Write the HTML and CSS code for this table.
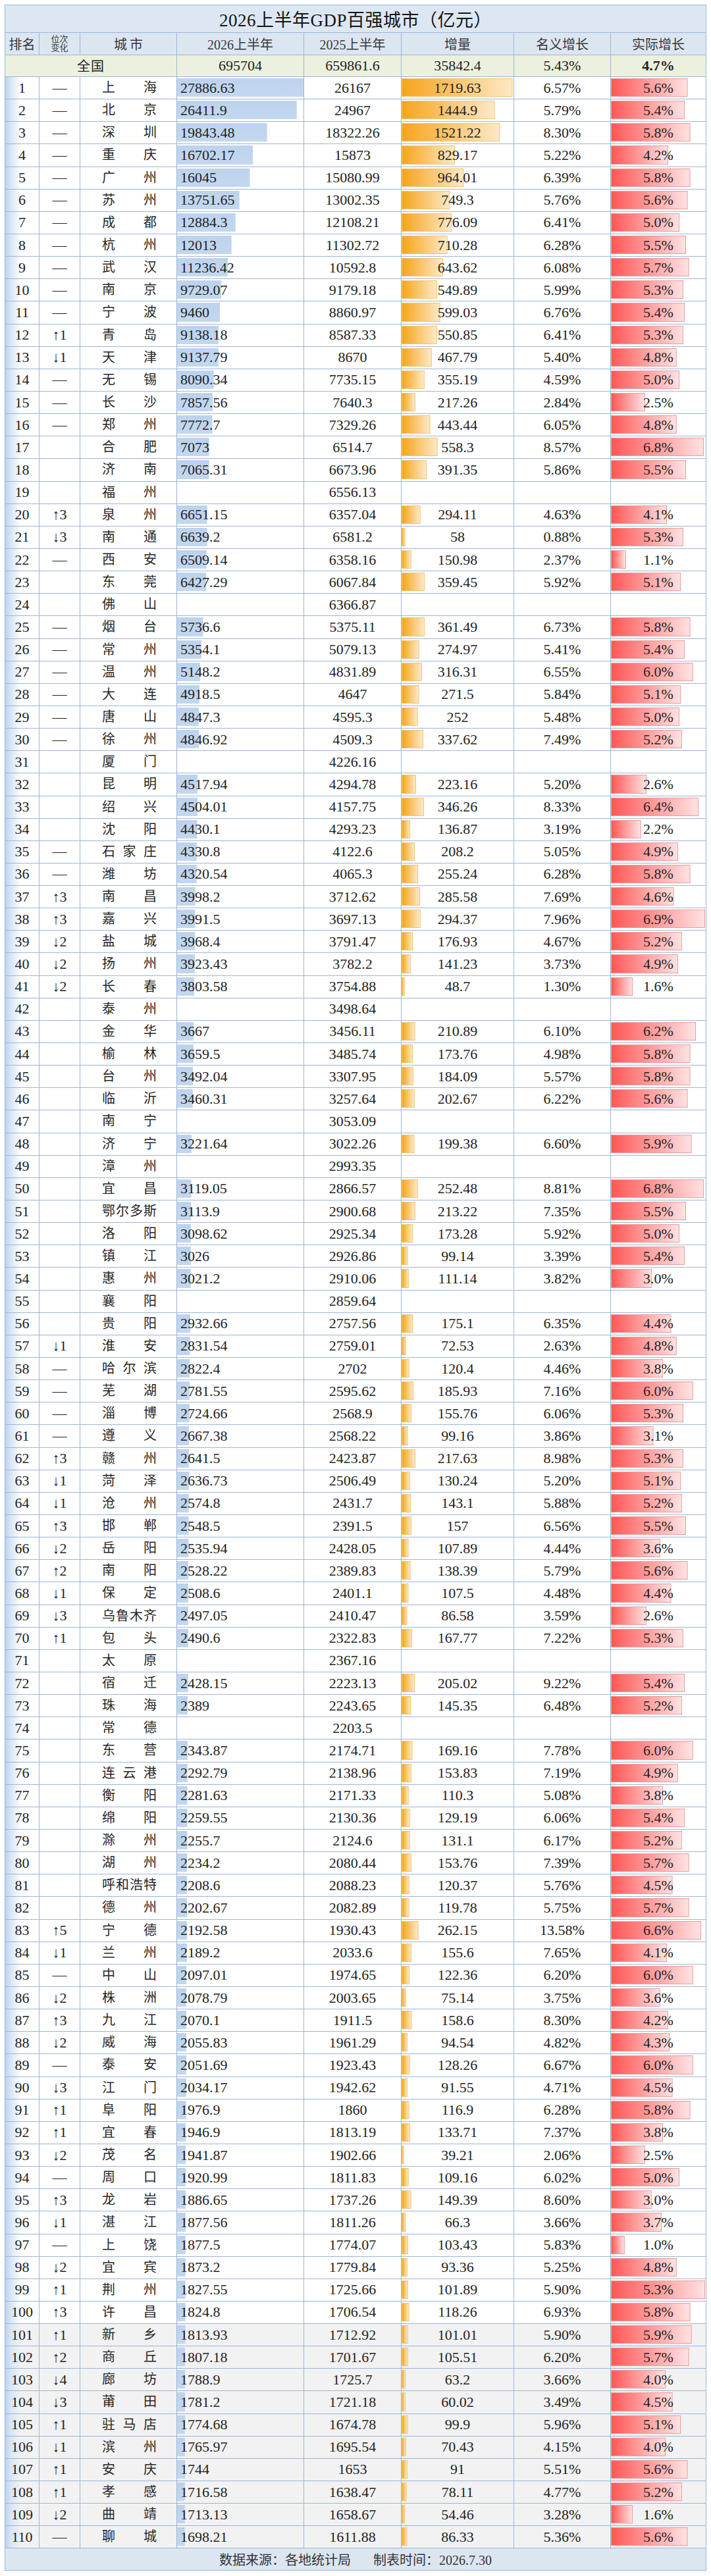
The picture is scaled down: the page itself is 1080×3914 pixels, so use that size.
FILE: index.html
```html
<!DOCTYPE html>
<html lang="zh-CN">
<head>
<meta charset="utf-8">
<title>2026上半年GDP百强城市（亿元）</title>
<link rel="stylesheet" href="styles.css">
</head>
<body>
<div class="page">
<div class="sheet">
<div class="title">2026上半年GDP百强城市（亿元）</div>
<div class="r hd"><div>排名</div><div class="sm">位次<br>变化</div><div class="sp">城市</div><div>2026上半年</div><div>2025上半年</div><div>增量</div><div>名义增长</div><div>实际增长</div></div>
<div class="r nat"><div class="all">全国</div><div>695704</div><div>659861.6</div><div>35842.4</div><div>5.43%</div><div class="bd">4.7%</div></div>
<div class="r"><div class="a">1</div><div class="b">—</div><div class="c">上海</div><div class="d" style="--w:192px">27886.63</div><div class="e">26167</div><div class="f" style="--w:168.5px">1719.63</div><div class="g">6.57%</div><div class="h" style="--w:116.5px">5.6%</div></div>
<div class="r"><div class="a">2</div><div class="b">—</div><div class="c">北京</div><div class="d" style="--w:181.8px">26411.9</div><div class="e">24967</div><div class="f" style="--w:141.6px">1444.9</div><div class="g">5.79%</div><div class="h" style="--w:112.3px">5.4%</div></div>
<div class="r"><div class="a">3</div><div class="b">—</div><div class="c">深圳</div><div class="d" style="--w:136.6px">19843.48</div><div class="e">18322.26</div><div class="f" style="--w:149.1px">1521.22</div><div class="g">8.30%</div><div class="h" style="--w:120.6px">5.8%</div></div>
<div class="r"><div class="a">4</div><div class="b">—</div><div class="c">重庆</div><div class="d" style="--w:115px">16702.17</div><div class="e">15873</div><div class="f" style="--w:81.3px">829.17</div><div class="g">5.22%</div><div class="h" style="--w:87.4px">4.2%</div></div>
<div class="r"><div class="a">5</div><div class="b">—</div><div class="c">广州</div><div class="d" style="--w:110.5px">16045</div><div class="e">15080.99</div><div class="f" style="--w:94.5px">964.01</div><div class="g">6.39%</div><div class="h" style="--w:120.6px">5.8%</div></div>
<div class="r"><div class="a">6</div><div class="b">—</div><div class="c">苏州</div><div class="d" style="--w:94.7px">13751.65</div><div class="e">13002.35</div><div class="f" style="--w:73.4px">749.3</div><div class="g">5.76%</div><div class="h" style="--w:116.5px">5.6%</div></div>
<div class="r"><div class="a">7</div><div class="b">—</div><div class="c">成都</div><div class="d" style="--w:88.7px">12884.3</div><div class="e">12108.21</div><div class="f" style="--w:76.1px">776.09</div><div class="g">6.41%</div><div class="h" style="--w:104px">5.0%</div></div>
<div class="r"><div class="a">8</div><div class="b">—</div><div class="c">杭州</div><div class="d" style="--w:82.7px">12013</div><div class="e">11302.72</div><div class="f" style="--w:69.6px">710.28</div><div class="g">6.28%</div><div class="h" style="--w:114.4px">5.5%</div></div>
<div class="r"><div class="a">9</div><div class="b">—</div><div class="c">武汉</div><div class="d" style="--w:77.4px">11236.42</div><div class="e">10592.8</div><div class="f" style="--w:63.1px">643.62</div><div class="g">6.08%</div><div class="h" style="--w:118.6px">5.7%</div></div>
<div class="r"><div class="a">10</div><div class="b">—</div><div class="c">南京</div><div class="d" style="--w:67px">9729.07</div><div class="e">9179.18</div><div class="f" style="--w:53.9px">549.89</div><div class="g">5.99%</div><div class="h" style="--w:110.2px">5.3%</div></div>
<div class="r"><div class="a">11</div><div class="b">—</div><div class="c">宁波</div><div class="d" style="--w:65.1px">9460</div><div class="e">8860.97</div><div class="f" style="--w:58.7px">599.03</div><div class="g">6.76%</div><div class="h" style="--w:112.3px">5.4%</div></div>
<div class="r"><div class="a">12</div><div class="b">↑1</div><div class="c">青岛</div><div class="d" style="--w:62.9px">9138.18</div><div class="e">8587.33</div><div class="f" style="--w:54px">550.85</div><div class="g">6.41%</div><div class="h" style="--w:110.2px">5.3%</div></div>
<div class="r"><div class="a">13</div><div class="b">↓1</div><div class="c">天津</div><div class="d" style="--w:62.9px">9137.79</div><div class="e">8670</div><div class="f" style="--w:45.8px">467.79</div><div class="g">5.40%</div><div class="h" style="--w:99.8px">4.8%</div></div>
<div class="r"><div class="a">14</div><div class="b">—</div><div class="c">无锡</div><div class="d" style="--w:55.7px">8090.34</div><div class="e">7735.15</div><div class="f" style="--w:34.8px">355.19</div><div class="g">4.59%</div><div class="h" style="--w:104px">5.0%</div></div>
<div class="r"><div class="a">15</div><div class="b">—</div><div class="c">长沙</div><div class="d" style="--w:54.1px">7857.56</div><div class="e">7640.3</div><div class="f" style="--w:21.3px">217.26</div><div class="g">2.84%</div><div class="h" style="--w:52px">2.5%</div></div>
<div class="r"><div class="a">16</div><div class="b">—</div><div class="c">郑州</div><div class="d" style="--w:53.5px">7772.7</div><div class="e">7329.26</div><div class="f" style="--w:43.5px">443.44</div><div class="g">6.05%</div><div class="h" style="--w:99.8px">4.8%</div></div>
<div class="r"><div class="a">17</div><div class="b"></div><div class="c">合肥</div><div class="d" style="--w:48.7px">7073</div><div class="e">6514.7</div><div class="f" style="--w:54.7px">558.3</div><div class="g">8.57%</div><div class="h" style="--w:141.4px">6.8%</div></div>
<div class="r"><div class="a">18</div><div class="b"></div><div class="c">济南</div><div class="d" style="--w:48.6px">7065.31</div><div class="e">6673.96</div><div class="f" style="--w:38.4px">391.35</div><div class="g">5.86%</div><div class="h" style="--w:114.4px">5.5%</div></div>
<div class="r"><div class="a">19</div><div class="b"></div><div class="c">福州</div><div class="d"></div><div class="e">6556.13</div><div class="f"></div><div class="g"></div><div class="h"></div></div>
<div class="r"><div class="a">20</div><div class="b">↑3</div><div class="c">泉州</div><div class="d" style="--w:45.8px">6651.15</div><div class="e">6357.04</div><div class="f" style="--w:28.8px">294.11</div><div class="g">4.63%</div><div class="h" style="--w:85.3px">4.1%</div></div>
<div class="r"><div class="a">21</div><div class="b">↓3</div><div class="c">南通</div><div class="d" style="--w:45.7px">6639.2</div><div class="e">6581.2</div><div class="f" style="--w:5.7px">58</div><div class="g">0.88%</div><div class="h" style="--w:110.2px">5.3%</div></div>
<div class="r"><div class="a">22</div><div class="b">—</div><div class="c">西安</div><div class="d" style="--w:44.8px">6509.14</div><div class="e">6358.16</div><div class="f" style="--w:14.8px">150.98</div><div class="g">2.37%</div><div class="h" style="--w:22.9px">1.1%</div></div>
<div class="r"><div class="a">23</div><div class="b"></div><div class="c">东莞</div><div class="d" style="--w:44.3px">6427.29</div><div class="e">6067.84</div><div class="f" style="--w:35.2px">359.45</div><div class="g">5.92%</div><div class="h" style="--w:106.1px">5.1%</div></div>
<div class="r"><div class="a">24</div><div class="b"></div><div class="c">佛山</div><div class="d"></div><div class="e">6366.87</div><div class="f"></div><div class="g"></div><div class="h"></div></div>
<div class="r"><div class="a">25</div><div class="b">—</div><div class="c">烟台</div><div class="d" style="--w:39.5px">5736.6</div><div class="e">5375.11</div><div class="f" style="--w:35.4px">361.49</div><div class="g">6.73%</div><div class="h" style="--w:120.6px">5.8%</div></div>
<div class="r"><div class="a">26</div><div class="b">—</div><div class="c">常州</div><div class="d" style="--w:36.9px">5354.1</div><div class="e">5079.13</div><div class="f" style="--w:26.9px">274.97</div><div class="g">5.41%</div><div class="h" style="--w:112.3px">5.4%</div></div>
<div class="r"><div class="a">27</div><div class="b">—</div><div class="c">温州</div><div class="d" style="--w:35.4px">5148.2</div><div class="e">4831.89</div><div class="f" style="--w:31px">316.31</div><div class="g">6.55%</div><div class="h" style="--w:124.8px">6.0%</div></div>
<div class="r"><div class="a">28</div><div class="b">—</div><div class="c">大连</div><div class="d" style="--w:33.9px">4918.5</div><div class="e">4647</div><div class="f" style="--w:26.6px">271.5</div><div class="g">5.84%</div><div class="h" style="--w:106.1px">5.1%</div></div>
<div class="r"><div class="a">29</div><div class="b">—</div><div class="c">唐山</div><div class="d" style="--w:33.4px">4847.3</div><div class="e">4595.3</div><div class="f" style="--w:24.7px">252</div><div class="g">5.48%</div><div class="h" style="--w:104px">5.0%</div></div>
<div class="r"><div class="a">30</div><div class="b">—</div><div class="c">徐州</div><div class="d" style="--w:33.4px">4846.92</div><div class="e">4509.3</div><div class="f" style="--w:33.1px">337.62</div><div class="g">7.49%</div><div class="h" style="--w:108.2px">5.2%</div></div>
<div class="r"><div class="a">31</div><div class="b"></div><div class="c">厦门</div><div class="d"></div><div class="e">4226.16</div><div class="f"></div><div class="g"></div><div class="h"></div></div>
<div class="r"><div class="a">32</div><div class="b"></div><div class="c">昆明</div><div class="d" style="--w:31.1px">4517.94</div><div class="e">4294.78</div><div class="f" style="--w:21.9px">223.16</div><div class="g">5.20%</div><div class="h" style="--w:54.1px">2.6%</div></div>
<div class="r"><div class="a">33</div><div class="b"></div><div class="c">绍兴</div><div class="d" style="--w:31px">4504.01</div><div class="e">4157.75</div><div class="f" style="--w:33.9px">346.26</div><div class="g">8.33%</div><div class="h" style="--w:133.1px">6.4%</div></div>
<div class="r"><div class="a">34</div><div class="b"></div><div class="c">沈阳</div><div class="d" style="--w:30.5px">4430.1</div><div class="e">4293.23</div><div class="f" style="--w:13.4px">136.87</div><div class="g">3.19%</div><div class="h" style="--w:45.8px">2.2%</div></div>
<div class="r"><div class="a">35</div><div class="b">—</div><div class="c">石家庄</div><div class="d" style="--w:29.8px">4330.8</div><div class="e">4122.6</div><div class="f" style="--w:20.4px">208.2</div><div class="g">5.05%</div><div class="h" style="--w:101.9px">4.9%</div></div>
<div class="r"><div class="a">36</div><div class="b">—</div><div class="c">潍坊</div><div class="d" style="--w:29.7px">4320.54</div><div class="e">4065.3</div><div class="f" style="--w:25px">255.24</div><div class="g">6.28%</div><div class="h" style="--w:120.6px">5.8%</div></div>
<div class="r"><div class="a">37</div><div class="b">↑3</div><div class="c">南昌</div><div class="d" style="--w:27.5px">3998.2</div><div class="e">3712.62</div><div class="f" style="--w:28px">285.58</div><div class="g">7.69%</div><div class="h" style="--w:95.7px">4.6%</div></div>
<div class="r"><div class="a">38</div><div class="b">↑3</div><div class="c">嘉兴</div><div class="d" style="--w:27.5px">3991.5</div><div class="e">3697.13</div><div class="f" style="--w:28.8px">294.37</div><div class="g">7.96%</div><div class="h" style="--w:143px">6.9%</div></div>
<div class="r"><div class="a">39</div><div class="b">↓2</div><div class="c">盐城</div><div class="d" style="--w:27.3px">3968.4</div><div class="e">3791.47</div><div class="f" style="--w:17.3px">176.93</div><div class="g">4.67%</div><div class="h" style="--w:108.2px">5.2%</div></div>
<div class="r"><div class="a">40</div><div class="b">↓2</div><div class="c">扬州</div><div class="d" style="--w:27px">3923.43</div><div class="e">3782.2</div><div class="f" style="--w:13.8px">141.23</div><div class="g">3.73%</div><div class="h" style="--w:101.9px">4.9%</div></div>
<div class="r"><div class="a">41</div><div class="b">↓2</div><div class="c">长春</div><div class="d" style="--w:26.2px">3803.58</div><div class="e">3754.88</div><div class="f" style="--w:4.8px">48.7</div><div class="g">1.30%</div><div class="h" style="--w:33.3px">1.6%</div></div>
<div class="r"><div class="a">42</div><div class="b"></div><div class="c">泰州</div><div class="d"></div><div class="e">3498.64</div><div class="f"></div><div class="g"></div><div class="h"></div></div>
<div class="r"><div class="a">43</div><div class="b"></div><div class="c">金华</div><div class="d" style="--w:25.2px">3667</div><div class="e">3456.11</div><div class="f" style="--w:20.7px">210.89</div><div class="g">6.10%</div><div class="h" style="--w:129px">6.2%</div></div>
<div class="r"><div class="a">44</div><div class="b"></div><div class="c">榆林</div><div class="d" style="--w:25.2px">3659.5</div><div class="e">3485.74</div><div class="f" style="--w:17px">173.76</div><div class="g">4.98%</div><div class="h" style="--w:120.6px">5.8%</div></div>
<div class="r"><div class="a">45</div><div class="b"></div><div class="c">台州</div><div class="d" style="--w:24px">3492.04</div><div class="e">3307.95</div><div class="f" style="--w:18px">184.09</div><div class="g">5.57%</div><div class="h" style="--w:120.6px">5.8%</div></div>
<div class="r"><div class="a">46</div><div class="b"></div><div class="c">临沂</div><div class="d" style="--w:23.8px">3460.31</div><div class="e">3257.64</div><div class="f" style="--w:19.9px">202.67</div><div class="g">6.22%</div><div class="h" style="--w:116.5px">5.6%</div></div>
<div class="r"><div class="a">47</div><div class="b"></div><div class="c">南宁</div><div class="d"></div><div class="e">3053.09</div><div class="f"></div><div class="g"></div><div class="h"></div></div>
<div class="r"><div class="a">48</div><div class="b"></div><div class="c">济宁</div><div class="d" style="--w:22.2px">3221.64</div><div class="e">3022.26</div><div class="f" style="--w:19.5px">199.38</div><div class="g">6.60%</div><div class="h" style="--w:122.7px">5.9%</div></div>
<div class="r"><div class="a">49</div><div class="b"></div><div class="c">漳州</div><div class="d"></div><div class="e">2993.35</div><div class="f"></div><div class="g"></div><div class="h"></div></div>
<div class="r"><div class="a">50</div><div class="b"></div><div class="c">宜昌</div><div class="d" style="--w:21.5px">3119.05</div><div class="e">2866.57</div><div class="f" style="--w:24.7px">252.48</div><div class="g">8.81%</div><div class="h" style="--w:141.4px">6.8%</div></div>
<div class="r"><div class="a">51</div><div class="b"></div><div class="c">鄂尔多斯</div><div class="d" style="--w:21.4px">3113.9</div><div class="e">2900.68</div><div class="f" style="--w:20.9px">213.22</div><div class="g">7.35%</div><div class="h" style="--w:114.4px">5.5%</div></div>
<div class="r"><div class="a">52</div><div class="b"></div><div class="c">洛阳</div><div class="d" style="--w:21.3px">3098.62</div><div class="e">2925.34</div><div class="f" style="--w:17px">173.28</div><div class="g">5.92%</div><div class="h" style="--w:104px">5.0%</div></div>
<div class="r"><div class="a">53</div><div class="b"></div><div class="c">镇江</div><div class="d" style="--w:20.8px">3026</div><div class="e">2926.86</div><div class="f" style="--w:9.7px">99.14</div><div class="g">3.39%</div><div class="h" style="--w:112.3px">5.4%</div></div>
<div class="r"><div class="a">54</div><div class="b"></div><div class="c">惠州</div><div class="d" style="--w:20.8px">3021.2</div><div class="e">2910.06</div><div class="f" style="--w:10.9px">111.14</div><div class="g">3.82%</div><div class="h" style="--w:62.4px">3.0%</div></div>
<div class="r"><div class="a">55</div><div class="b"></div><div class="c">襄阳</div><div class="d"></div><div class="e">2859.64</div><div class="f"></div><div class="g"></div><div class="h"></div></div>
<div class="r"><div class="a">56</div><div class="b"></div><div class="c">贵阳</div><div class="d" style="--w:20.2px">2932.66</div><div class="e">2757.56</div><div class="f" style="--w:17.2px">175.1</div><div class="g">6.35%</div><div class="h" style="--w:91.5px">4.4%</div></div>
<div class="r"><div class="a">57</div><div class="b">↓1</div><div class="c">淮安</div><div class="d" style="--w:19.5px">2831.54</div><div class="e">2759.01</div><div class="f" style="--w:7.1px">72.53</div><div class="g">2.63%</div><div class="h" style="--w:99.8px">4.8%</div></div>
<div class="r"><div class="a">58</div><div class="b">—</div><div class="c">哈尔滨</div><div class="d" style="--w:19.4px">2822.4</div><div class="e">2702</div><div class="f" style="--w:11.8px">120.4</div><div class="g">4.46%</div><div class="h" style="--w:79px">3.8%</div></div>
<div class="r"><div class="a">59</div><div class="b">—</div><div class="c">芜湖</div><div class="d" style="--w:19.2px">2781.55</div><div class="e">2595.62</div><div class="f" style="--w:18.2px">185.93</div><div class="g">7.16%</div><div class="h" style="--w:124.8px">6.0%</div></div>
<div class="r"><div class="a">60</div><div class="b">—</div><div class="c">淄博</div><div class="d" style="--w:18.8px">2724.66</div><div class="e">2568.9</div><div class="f" style="--w:15.3px">155.76</div><div class="g">6.06%</div><div class="h" style="--w:110.2px">5.3%</div></div>
<div class="r"><div class="a">61</div><div class="b">—</div><div class="c">遵义</div><div class="d" style="--w:18.4px">2667.38</div><div class="e">2568.22</div><div class="f" style="--w:9.7px">99.16</div><div class="g">3.86%</div><div class="h" style="--w:64.5px">3.1%</div></div>
<div class="r"><div class="a">62</div><div class="b">↑3</div><div class="c">赣州</div><div class="d" style="--w:18.2px">2641.5</div><div class="e">2423.87</div><div class="f" style="--w:21.3px">217.63</div><div class="g">8.98%</div><div class="h" style="--w:110.2px">5.3%</div></div>
<div class="r"><div class="a">63</div><div class="b">↓1</div><div class="c">菏泽</div><div class="d" style="--w:18.2px">2636.73</div><div class="e">2506.49</div><div class="f" style="--w:12.8px">130.24</div><div class="g">5.20%</div><div class="h" style="--w:106.1px">5.1%</div></div>
<div class="r"><div class="a">64</div><div class="b">↓1</div><div class="c">沧州</div><div class="d" style="--w:17.7px">2574.8</div><div class="e">2431.7</div><div class="f" style="--w:14px">143.1</div><div class="g">5.88%</div><div class="h" style="--w:108.2px">5.2%</div></div>
<div class="r"><div class="a">65</div><div class="b">↑3</div><div class="c">邯郸</div><div class="d" style="--w:17.5px">2548.5</div><div class="e">2391.5</div><div class="f" style="--w:15.4px">157</div><div class="g">6.56%</div><div class="h" style="--w:114.4px">5.5%</div></div>
<div class="r"><div class="a">66</div><div class="b">↓2</div><div class="c">岳阳</div><div class="d" style="--w:17.5px">2535.94</div><div class="e">2428.05</div><div class="f" style="--w:10.6px">107.89</div><div class="g">4.44%</div><div class="h" style="--w:74.9px">3.6%</div></div>
<div class="r"><div class="a">67</div><div class="b">↑2</div><div class="c">南阳</div><div class="d" style="--w:17.4px">2528.22</div><div class="e">2389.83</div><div class="f" style="--w:13.6px">138.39</div><div class="g">5.79%</div><div class="h" style="--w:116.5px">5.6%</div></div>
<div class="r"><div class="a">68</div><div class="b">↓1</div><div class="c">保定</div><div class="d" style="--w:17.3px">2508.6</div><div class="e">2401.1</div><div class="f" style="--w:10.5px">107.5</div><div class="g">4.48%</div><div class="h" style="--w:91.5px">4.4%</div></div>
<div class="r"><div class="a">69</div><div class="b">↓3</div><div class="c">乌鲁木齐</div><div class="d" style="--w:17.2px">2497.05</div><div class="e">2410.47</div><div class="f" style="--w:8.5px">86.58</div><div class="g">3.59%</div><div class="h" style="--w:54.1px">2.6%</div></div>
<div class="r"><div class="a">70</div><div class="b">↑1</div><div class="c">包头</div><div class="d" style="--w:17.1px">2490.6</div><div class="e">2322.83</div><div class="f" style="--w:16.4px">167.77</div><div class="g">7.22%</div><div class="h" style="--w:110.2px">5.3%</div></div>
<div class="r"><div class="a">71</div><div class="b"></div><div class="c">太原</div><div class="d"></div><div class="e">2367.16</div><div class="f"></div><div class="g"></div><div class="h"></div></div>
<div class="r"><div class="a">72</div><div class="b"></div><div class="c">宿迁</div><div class="d" style="--w:16.7px">2428.15</div><div class="e">2223.13</div><div class="f" style="--w:20.1px">205.02</div><div class="g">9.22%</div><div class="h" style="--w:112.3px">5.4%</div></div>
<div class="r"><div class="a">73</div><div class="b"></div><div class="c">珠海</div><div class="d" style="--w:16.4px">2389</div><div class="e">2243.65</div><div class="f" style="--w:14.2px">145.35</div><div class="g">6.48%</div><div class="h" style="--w:108.2px">5.2%</div></div>
<div class="r"><div class="a">74</div><div class="b"></div><div class="c">常德</div><div class="d"></div><div class="e">2203.5</div><div class="f"></div><div class="g"></div><div class="h"></div></div>
<div class="r"><div class="a">75</div><div class="b"></div><div class="c">东营</div><div class="d" style="--w:16.1px">2343.87</div><div class="e">2174.71</div><div class="f" style="--w:16.6px">169.16</div><div class="g">7.78%</div><div class="h" style="--w:124.8px">6.0%</div></div>
<div class="r"><div class="a">76</div><div class="b"></div><div class="c">连云港</div><div class="d" style="--w:15.8px">2292.79</div><div class="e">2138.96</div><div class="f" style="--w:15.1px">153.83</div><div class="g">7.19%</div><div class="h" style="--w:101.9px">4.9%</div></div>
<div class="r"><div class="a">77</div><div class="b"></div><div class="c">衡阳</div><div class="d" style="--w:15.7px">2281.63</div><div class="e">2171.33</div><div class="f" style="--w:10.8px">110.3</div><div class="g">5.08%</div><div class="h" style="--w:79px">3.8%</div></div>
<div class="r"><div class="a">78</div><div class="b"></div><div class="c">绵阳</div><div class="d" style="--w:15.6px">2259.55</div><div class="e">2130.36</div><div class="f" style="--w:12.7px">129.19</div><div class="g">6.06%</div><div class="h" style="--w:112.3px">5.4%</div></div>
<div class="r"><div class="a">79</div><div class="b"></div><div class="c">滁州</div><div class="d" style="--w:15.5px">2255.7</div><div class="e">2124.6</div><div class="f" style="--w:12.8px">131.1</div><div class="g">6.17%</div><div class="h" style="--w:108.2px">5.2%</div></div>
<div class="r"><div class="a">80</div><div class="b"></div><div class="c">湖州</div><div class="d" style="--w:15.4px">2234.2</div><div class="e">2080.44</div><div class="f" style="--w:15.1px">153.76</div><div class="g">7.39%</div><div class="h" style="--w:118.6px">5.7%</div></div>
<div class="r"><div class="a">81</div><div class="b"></div><div class="c">呼和浩特</div><div class="d" style="--w:15.2px">2208.6</div><div class="e">2088.23</div><div class="f" style="--w:11.8px">120.37</div><div class="g">5.76%</div><div class="h" style="--w:93.6px">4.5%</div></div>
<div class="r"><div class="a">82</div><div class="b"></div><div class="c">德州</div><div class="d" style="--w:15.2px">2202.67</div><div class="e">2082.89</div><div class="f" style="--w:11.7px">119.78</div><div class="g">5.75%</div><div class="h" style="--w:118.6px">5.7%</div></div>
<div class="r"><div class="a">83</div><div class="b">↑5</div><div class="c">宁德</div><div class="d" style="--w:15.1px">2192.58</div><div class="e">1930.43</div><div class="f" style="--w:25.7px">262.15</div><div class="g">13.58%</div><div class="h" style="--w:137.3px">6.6%</div></div>
<div class="r"><div class="a">84</div><div class="b">↓1</div><div class="c">兰州</div><div class="d" style="--w:15.1px">2189.2</div><div class="e">2033.6</div><div class="f" style="--w:15.2px">155.6</div><div class="g">7.65%</div><div class="h" style="--w:85.3px">4.1%</div></div>
<div class="r"><div class="a">85</div><div class="b">—</div><div class="c">中山</div><div class="d" style="--w:14.4px">2097.01</div><div class="e">1974.65</div><div class="f" style="--w:12px">122.36</div><div class="g">6.20%</div><div class="h" style="--w:124.8px">6.0%</div></div>
<div class="r"><div class="a">86</div><div class="b">↓2</div><div class="c">株洲</div><div class="d" style="--w:14.3px">2078.79</div><div class="e">2003.65</div><div class="f" style="--w:7.4px">75.14</div><div class="g">3.75%</div><div class="h" style="--w:74.9px">3.6%</div></div>
<div class="r"><div class="a">87</div><div class="b">↑3</div><div class="c">九江</div><div class="d" style="--w:14.3px">2070.1</div><div class="e">1911.5</div><div class="f" style="--w:15.5px">158.6</div><div class="g">8.30%</div><div class="h" style="--w:87.4px">4.2%</div></div>
<div class="r"><div class="a">88</div><div class="b">↓2</div><div class="c">威海</div><div class="d" style="--w:14.2px">2055.83</div><div class="e">1961.29</div><div class="f" style="--w:9.3px">94.54</div><div class="g">4.82%</div><div class="h" style="--w:89.4px">4.3%</div></div>
<div class="r"><div class="a">89</div><div class="b">—</div><div class="c">泰安</div><div class="d" style="--w:14.1px">2051.69</div><div class="e">1923.43</div><div class="f" style="--w:12.6px">128.26</div><div class="g">6.67%</div><div class="h" style="--w:124.8px">6.0%</div></div>
<div class="r"><div class="a">90</div><div class="b">↓3</div><div class="c">江门</div><div class="d" style="--w:14px">2034.17</div><div class="e">1942.62</div><div class="f" style="--w:9px">91.55</div><div class="g">4.71%</div><div class="h" style="--w:93.6px">4.5%</div></div>
<div class="r"><div class="a">91</div><div class="b">↑1</div><div class="c">阜阳</div><div class="d" style="--w:13.6px">1976.9</div><div class="e">1860</div><div class="f" style="--w:11.5px">116.9</div><div class="g">6.28%</div><div class="h" style="--w:120.6px">5.8%</div></div>
<div class="r"><div class="a">92</div><div class="b">↑1</div><div class="c">宜春</div><div class="d" style="--w:13.4px">1946.9</div><div class="e">1813.19</div><div class="f" style="--w:13.1px">133.71</div><div class="g">7.37%</div><div class="h" style="--w:79px">3.8%</div></div>
<div class="r"><div class="a">93</div><div class="b">↓2</div><div class="c">茂名</div><div class="d" style="--w:13.4px">1941.87</div><div class="e">1902.66</div><div class="f" style="--w:3.8px">39.21</div><div class="g">2.06%</div><div class="h" style="--w:52px">2.5%</div></div>
<div class="r"><div class="a">94</div><div class="b">—</div><div class="c">周口</div><div class="d" style="--w:13.2px">1920.99</div><div class="e">1811.83</div><div class="f" style="--w:10.7px">109.16</div><div class="g">6.02%</div><div class="h" style="--w:104px">5.0%</div></div>
<div class="r"><div class="a">95</div><div class="b">↑3</div><div class="c">龙岩</div><div class="d" style="--w:13px">1886.65</div><div class="e">1737.26</div><div class="f" style="--w:14.6px">149.39</div><div class="g">8.60%</div><div class="h" style="--w:62.4px">3.0%</div></div>
<div class="r"><div class="a">96</div><div class="b">↓1</div><div class="c">湛江</div><div class="d" style="--w:12.9px">1877.56</div><div class="e">1811.26</div><div class="f" style="--w:6.5px">66.3</div><div class="g">3.66%</div><div class="h" style="--w:77px">3.7%</div></div>
<div class="r"><div class="a">97</div><div class="b">—</div><div class="c">上饶</div><div class="d" style="--w:12.9px">1877.5</div><div class="e">1774.07</div><div class="f" style="--w:10.1px">103.43</div><div class="g">5.83%</div><div class="h" style="--w:20.8px">1.0%</div></div>
<div class="r"><div class="a">98</div><div class="b">↓2</div><div class="c">宜宾</div><div class="d" style="--w:12.9px">1873.2</div><div class="e">1779.84</div><div class="f" style="--w:9.1px">93.36</div><div class="g">5.25%</div><div class="h" style="--w:99.8px">4.8%</div></div>
<div class="r"><div class="a">99</div><div class="b">↑1</div><div class="c">荆州</div><div class="d" style="--w:12.6px">1827.55</div><div class="e">1725.66</div><div class="f" style="--w:10px">101.89</div><div class="g">5.90%</div><div class="h" style="--w:143px">5.3%</div></div>
<div class="r"><div class="a">100</div><div class="b">↑3</div><div class="c">许昌</div><div class="d" style="--w:12.6px">1824.8</div><div class="e">1706.54</div><div class="f" style="--w:11.6px">118.26</div><div class="g">6.93%</div><div class="h" style="--w:120.6px">5.8%</div></div>
<div class="r z"><div class="a">101</div><div class="b">↑1</div><div class="c">新乡</div><div class="d" style="--w:12.5px">1813.93</div><div class="e">1712.92</div><div class="f" style="--w:9.9px">101.01</div><div class="g">5.90%</div><div class="h" style="--w:122.7px">5.9%</div></div>
<div class="r z"><div class="a">102</div><div class="b">↑2</div><div class="c">商丘</div><div class="d" style="--w:12.4px">1807.18</div><div class="e">1701.67</div><div class="f" style="--w:10.3px">105.51</div><div class="g">6.20%</div><div class="h" style="--w:118.6px">5.7%</div></div>
<div class="r z"><div class="a">103</div><div class="b">↓4</div><div class="c">廊坊</div><div class="d" style="--w:12.3px">1788.9</div><div class="e">1725.7</div><div class="f" style="--w:6.2px">63.2</div><div class="g">3.66%</div><div class="h" style="--w:83.2px">4.0%</div></div>
<div class="r z"><div class="a">104</div><div class="b">↓3</div><div class="c">莆田</div><div class="d" style="--w:12.3px">1781.2</div><div class="e">1721.18</div><div class="f" style="--w:5.9px">60.02</div><div class="g">3.49%</div><div class="h" style="--w:93.6px">4.5%</div></div>
<div class="r z"><div class="a">105</div><div class="b">↑1</div><div class="c">驻马店</div><div class="d" style="--w:12.2px">1774.68</div><div class="e">1674.78</div><div class="f" style="--w:9.8px">99.9</div><div class="g">5.96%</div><div class="h" style="--w:106.1px">5.1%</div></div>
<div class="r z"><div class="a">106</div><div class="b">↓1</div><div class="c">滨州</div><div class="d" style="--w:12.2px">1765.97</div><div class="e">1695.54</div><div class="f" style="--w:6.9px">70.43</div><div class="g">4.15%</div><div class="h" style="--w:83.2px">4.0%</div></div>
<div class="r z"><div class="a">107</div><div class="b">↑1</div><div class="c">安庆</div><div class="d" style="--w:12px">1744</div><div class="e">1653</div><div class="f" style="--w:8.9px">91</div><div class="g">5.51%</div><div class="h" style="--w:116.5px">5.6%</div></div>
<div class="r z"><div class="a">108</div><div class="b">↑1</div><div class="c">孝感</div><div class="d" style="--w:11.8px">1716.58</div><div class="e">1638.47</div><div class="f" style="--w:7.7px">78.11</div><div class="g">4.77%</div><div class="h" style="--w:108.2px">5.2%</div></div>
<div class="r z"><div class="a">109</div><div class="b">↓2</div><div class="c">曲靖</div><div class="d" style="--w:11.8px">1713.13</div><div class="e">1658.67</div><div class="f" style="--w:5.3px">54.46</div><div class="g">3.28%</div><div class="h" style="--w:33.3px">1.6%</div></div>
<div class="r z"><div class="a">110</div><div class="b">—</div><div class="c">聊城</div><div class="d" style="--w:11.7px">1698.21</div><div class="e">1611.88</div><div class="f" style="--w:8.5px">86.33</div><div class="g">5.36%</div><div class="h" style="--w:116.5px">5.6%</div></div>
<div class="ft"><span>数据来源：各地统计局</span><span>制表时间：2026.7.30</span></div>
</div>
</div>
</body>
</html>
```

FILE: styles.css
```css
* { box-sizing: border-box; }

body {
  margin: 0;
  background: #ffffff;
}

.page {
  width: 1080px;
  padding: 7px;
}

.sheet {
  width: 1066px;
  border: 1px solid #9cb6d8;
  font-family: "Liberation Serif", "Noto Sans CJK SC", serif;
  font-size: 22px;
  color: #222222;
}

.title {
  height: 42px;
  display: flex;
  align-items: center;
  justify-content: center;
  background: #dde7f3;
  border-bottom: 1px solid #9cb6d8;
  font-size: 27px;
  color: #151515;
  letter-spacing: 0.5px;
}

.r {
  display: grid;
  grid-template-columns: 52px 62px 147px 193px 148px 171px 147px 144px;
  height: 34.15px;
  border-bottom: 1px solid #9cb6d8;
}

.r > div {
  display: flex;
  align-items: center;
  justify-content: center;
  white-space: nowrap;
  border-right: 1px solid #9cb6d8;
  min-width: 0;
}

.r > div:last-child { border-right: 0; }

.r.z { background: #f2f2f2; }

/* header */
.hd {
  height: 33.5px;
  background: #dce6f1;
  font-size: 20px;
  color: #383838;
}

.hd .sm {
  font-size: 13px;
  line-height: 13px;
  text-align: center;
}

.hd .sp { letter-spacing: 4px; padding-left: 4px; }

/* national row */
.nat {
  height: 33.5px;
  background: #ebf1de;
}

.nat .all {
  grid-column: span 3;
  font-size: 20px;
  letter-spacing: 1px;
}

.nat .bd { font-weight: bold; }

/* rank */
.a {
  background: linear-gradient(90deg, #bed3ed 0, #d9e6f5 9px, rgba(255, 255, 255, 0) 24px);
}

/* city, distributed */
.r > .c {
  display: block;
  font-size: 20px;
  line-height: 32px;
  padding: 0 30px 0 33px;
  text-align: justify;
  text-align-last: justify;
  color: #262626;
}

/* 2026 values with blue data bar */
.d {
  justify-content: flex-start !important;
  padding-left: 5px;
  background-image: linear-gradient(#bdd3ed, #c3d8ef);
  background-repeat: no-repeat;
  background-position: 0 2px;
  background-size: var(--w, 0px) calc(100% - 5px);
}

/* increase with orange gradient bar */
.f {
  background-image:
    linear-gradient(90deg, #f7a41c, #fde9c6),
    linear-gradient(#f3c46f, #f3c46f);
  background-repeat: no-repeat, no-repeat;
  background-position: 1px 3px, 0 2px;
  background-size:
    max(0px, calc(var(--w, 0px) - 2px)) calc(100% - 7px),
    var(--w, 0px) calc(100% - 5px);
}

/* real growth with red gradient bar */
.h {
  background-image:
    linear-gradient(90deg, #ff5757, #ffe2e2),
    linear-gradient(#ef9a9a, #ef9a9a);
  background-repeat: no-repeat, no-repeat;
  background-position: 1px 3px, 0 2px;
  background-size:
    max(0px, calc(var(--w, 0px) - 2px)) calc(100% - 7px),
    var(--w, 0px) calc(100% - 5px);
}

/* footer */
.ft {
  height: 32.5px;
  display: flex;
  align-items: center;
  justify-content: center;
  gap: 34px;
  background: #dce6f1;
  font-size: 20px;
  color: #333333;
}
```
